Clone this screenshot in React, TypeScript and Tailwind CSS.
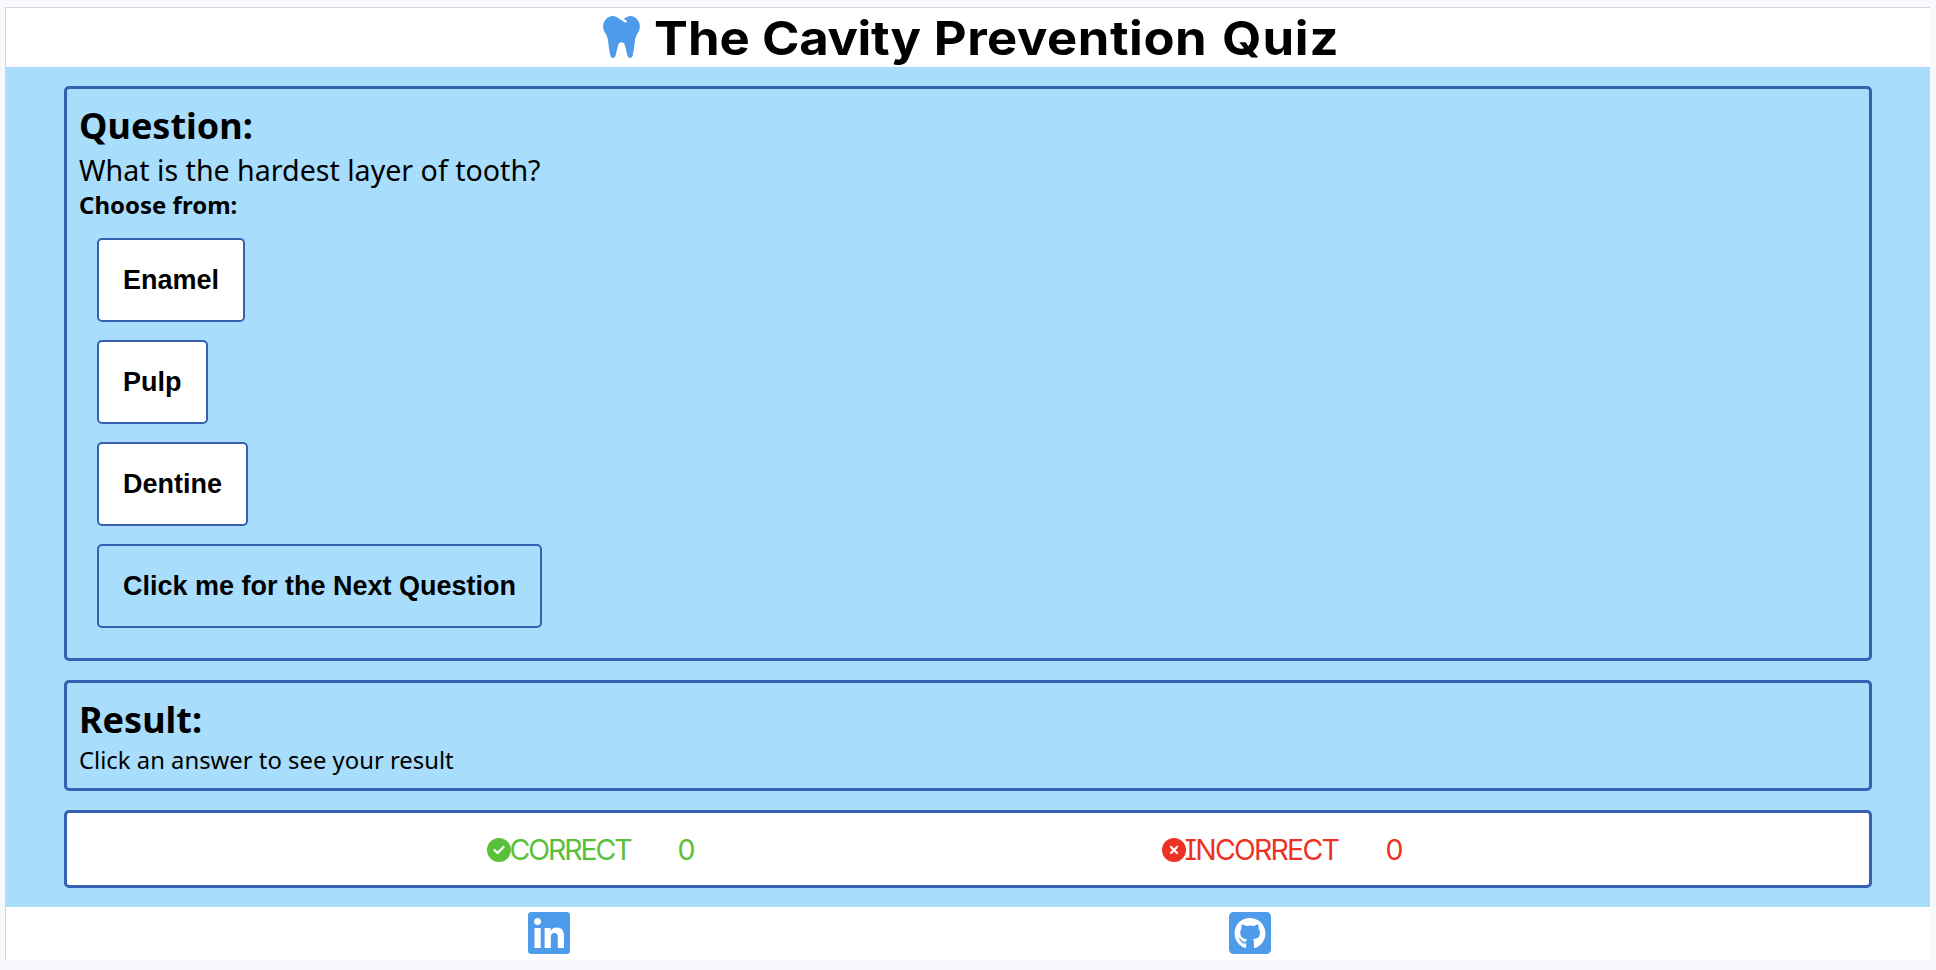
import { FaCircleCheck, FaCircleXmark, FaLinkedin } from "react-icons/fa6";
import { FaGithubSquare, FaTooth } from "react-icons/fa";

const answers = ["Enamel", "Pulp", "Dentine"];

const buttonBase =
  "h-[84px] w-fit rounded-[5px] border-2 border-[#3760b3] px-[24px] font-['Liberation_Sans',sans-serif] text-[27px] leading-8 font-bold text-black";

function Title() {
  return (
    <h1 className="flex h-[46px] w-[640px] origin-left scale-x-[1.08] items-center pt-px font-['Inter',sans-serif] text-[47px] leading-[46px] font-bold whitespace-nowrap text-black">
      <span className="w-[100px]">The </span>
      <span className="w-[159px] tracking-[-0.3px]">Cavity </span>
      <span className="w-[267px] tracking-[0.5px]">Prevention </span>
      <span className="tracking-[0.8px]">Quiz</span>
    </h1>
  );
}

export default function App() {
  return (
    <div className="flex h-[970px] w-full flex-col bg-[#f8f9fd] pt-[7px] pr-[6px] pb-[10px] pl-[5px]">
      <div className="flex h-[953px] flex-col border-t border-l border-[#d4d4d4] bg-white">
        <header className="flex h-[58.5px] shrink-0 items-center gap-[14px] pl-[597px]">
          <FaTooth className="h-[42px] w-[37px] text-[#4d9bea]" />
          <Title />
        </header>

        <main className="flex h-[840.5px] shrink-0 flex-col bg-[#a8ddfc] px-[58px] pt-[19.5px]">
          <section className="flex h-[574.5px] shrink-0 flex-col rounded-[5px] border-[3px] border-[#3760b3] px-3 pt-3 font-['Noto_Sans',sans-serif] text-black">
            <h2 className="text-[36px] leading-[49px] font-bold">Question:</h2>
            <p className="text-[28.6px] leading-[40px]">What is the hardest layer of tooth?</p>
            <p className="text-[24px] leading-[30px] font-bold">Choose from:</p>
            <div className="mt-[18px] flex flex-col gap-[18px] pl-[18px]">
              {answers.map((answer) => (
                <button key={answer} className={`${buttonBase} bg-white`}>
                  {answer}
                </button>
              ))}
              <button className={buttonBase}>Click me for the Next Question</button>
            </div>
          </section>

          <section className="mt-[19px] flex h-[111px] shrink-0 flex-col rounded-[5px] border-[3px] border-[#3760b3] px-3 pt-3 font-['Noto_Sans',sans-serif] text-black">
            <h2 className="text-[36px] leading-[49px] font-bold">Result:</h2>
            <p className="text-[23.85px] leading-[32px]">Click an answer to see your result</p>
          </section>

          <section className="mt-[19.5px] flex h-[78px] shrink-0 items-center rounded-[5px] border-[3px] border-[#3760b3] bg-white pt-px pl-[420px] font-['Inter',sans-serif] text-[28.5px] leading-8">
            <div className="flex w-[675px] items-center text-[#59c039]">
              <FaCircleCheck className="size-6" />
              <span className="-ml-[1.5px] w-[168px] tracking-[-2.1px]">CORRECT</span>
              <span>0</span>
            </div>
            <div className="flex items-center text-[#ec3323]">
              <FaCircleXmark className="size-6" />
              <span className="-ml-[1.5px] w-[201px] tracking-[-1.8px]">
                <span className="[font-feature-settings:'cv08']">I</span>NCORRECT
              </span>
              <span>0</span>
            </div>
          </section>
        </main>

        <footer className="flex h-[52px] shrink-0 items-center gap-[659px] pl-[522px] text-[#4d9bea]">
          <FaLinkedin className="h-12 w-[42px]" />
          <FaGithubSquare className="h-12 w-[42px]" />
        </footer>
      </div>
    </div>
  );
}
